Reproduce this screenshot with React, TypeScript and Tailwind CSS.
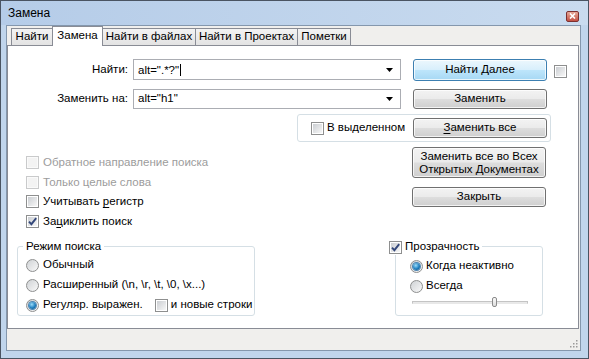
import clsx from "clsx";
import type { ReactNode } from "react";

const ui = "font-['Liberation_Sans',Arial,sans-serif] text-[11.5px] leading-none text-black";

function CheckBox({ checked = false, disabled = false }: { checked?: boolean; disabled?: boolean }) {
  return (
    <span
      className={clsx(
        "flex h-[13px] w-[13px] shrink-0 border p-px",
        disabled ? "border-[#c9cacb] bg-[#fafafa]" : "border-[#8e8f8f] bg-white"
      )}
    >
      <span
        className={clsx(
          "relative flex h-full w-full items-center justify-center",
          disabled ? "bg-[#f3f3f3]" : "bg-linear-to-br from-[#cbced2] to-[#f7f7f7]"
        )}
      >
        {checked && (
          <svg viewBox="0 0 11 11" className="absolute left-[-1px] top-[-1px] h-[11px] w-[11px]">
            <path d="M2 5.6 L4.4 8.2 L9.2 2.2" fill="none" stroke="#33477a" strokeWidth="1.9" />
          </svg>
        )}
      </span>
    </span>
  );
}

function Radio({ checked = false }: { checked?: boolean }) {
  return (
    <span className="flex h-[13px] w-[13px] shrink-0 items-center justify-center rounded-full border border-[#8e8f8f] bg-linear-to-br from-[#cfd2d5] to-[#f9f9f9]">
      {checked && (
        <span className="h-[7px] w-[7px] rounded-full bg-[radial-gradient(circle_at_40%_35%,#9ddcf8,#1e7fc0_55%,#0c4877)] shadow-[0_0_0_1px_#4d86b3]" />
      )}
    </span>
  );
}

function Button({ children, primary = false, className }: { children: ReactNode; primary?: boolean; className?: string }) {
  return (
    <div
      className={clsx(
        "flex w-[134px] shrink-0 flex-col items-center justify-center rounded-[3px] border text-center shadow-[inset_0_0_0_1px_rgba(255,255,255,0.75)]",
        primary
          ? "border-[#3c7fb1] bg-[linear-gradient(#ecf7fd,#d8effc_48%,#bde5fb_52%,#a6d8f4)]"
          : "border-[#707070] bg-[linear-gradient(#f3f3f3,#ebebeb_48%,#dddddd_52%,#cfcfcf)]",
        className
      )}
    >
      {children}
    </div>
  );
}

function Combo({ value, caret = false, className }: { value: string; caret?: boolean; className?: string }) {
  return (
    <div className={clsx("flex w-[268px] items-center border border-[#abadb3] bg-white pl-[4px] pr-[7px]", className)}>
      <span className="flex-1">
        {value}
        {caret && <span className="ml-px inline-block h-[12px] w-px translate-y-[2px] bg-black" />}
      </span>
      <svg viewBox="0 0 7 4" className="h-[4px] w-[7px]">
        <path d="M0 0 H7 L3.5 4 Z" fill="#000" />
      </svg>
    </div>
  );
}

function Option({ children, checked, disabled }: { children: ReactNode; checked?: boolean; disabled?: boolean }) {
  return (
    <div className="flex h-[19.5px] items-center gap-[4px]">
      <CheckBox checked={checked} disabled={disabled} />
      <span className={disabled ? "text-[#9c9c9c]" : ""}>{children}</span>
    </div>
  );
}

const tabs = [
  { label: "Найти", w: "w-[42px]" },
  { label: "Замена", w: "w-[51px]", active: true },
  { label: "Найти в файлах", w: "w-[94px]" },
  { label: "Найти в Проектах", w: "w-[103px]" },
  { label: "Пометки", w: "w-[54px]" },
];

export default function App() {
  return (
    <div className={clsx("flex h-[359px] w-[589px] flex-col border border-[#4a5462] bg-[#c0d5ec]", ui)}>
      {/* title bar */}
      <div className="flex h-[24px] shrink-0 items-center justify-between bg-linear-to-r from-[#b5cce8] to-[#c9dbef] pl-[7px] pr-[9px]">
        <span className="text-[12px]">Замена</span>
        <span className="mt-[6px] flex h-[11px] w-[13px] items-center justify-center rounded-[2px] border border-[#7d3030] bg-linear-to-b from-[#e6a797] to-[#c24f43]">
          <svg viewBox="0 0 7 6" className="h-[6px] w-[7px]">
            <path d="M1 0.5 L6 5.5 M6 0.5 L1 5.5" stroke="#fff" strokeWidth="1.6" />
          </svg>
        </span>
      </div>

      {/* client area */}
      <div className="ml-[5px] mr-[7px] flex h-[326px] shrink-0 flex-col border border-[#8497ad] bg-[#f0efed]">
        <div className="flex h-[19px] shrink-0 items-end pl-[4px]">
          {tabs.map((t) => (
            <div
              key={t.label}
              className={clsx(
                "-ml-px flex items-center justify-center border border-b-0 first:ml-0",
                t.w,
                t.active
                  ? "relative z-10 -mb-px h-[20px] border-[#898c95] bg-white pb-[2px]"
                  : "h-[17px] border-[#898c95] bg-linear-to-b from-[#f3f3f3] to-[#e3e3e3]"
              )}
            >
              {t.label}
            </div>
          ))}
        </div>

        {/* tab page */}
        <div className="flex h-[284px] w-[572px] shrink-0 flex-col border border-[#898c95] bg-white">
          <div className="mt-[13px] flex h-[22px] items-center">
            <span className="w-[120px] text-right">Найти:</span>
            <Combo value={'alt=".*?"'} caret className="ml-[5px] h-[21px] self-start" />
            <Button primary className="ml-[12px] h-[22px]">
              Найти Далее
            </Button>
            <span className="ml-[7px] mt-[2px]">
              <CheckBox />
            </span>
          </div>

          <div className="mt-[8px] flex h-[20px] items-center">
            <span className="w-[120px] text-right">Заменить на:</span>
            <Combo value={'alt="h1"'} className="ml-[5px] h-[20px]" />
            <Button className="ml-[12px] h-[20px]">Заменить</Button>
          </div>

          <div className="mt-[5px] flex h-[28px]">
            <div className="ml-[289px] flex w-[254px] items-center justify-between rounded-[3px] border border-[#d5dfe5] pl-[13px] pr-[3px]">
              <span className="flex items-center gap-[3px]">
                <CheckBox />
                В выделенном
              </span>
              <Button className="h-[20px]">
                <span>
                  <span className="underline underline-offset-2">З</span>аменить все
                </span>
              </Button>
            </div>
          </div>

          <div className="flex h-[104px]">
            <div className="ml-[18px] flex w-[386px] flex-col pt-[11px]">
              <Option disabled>Обратное направление поиска</Option>
              <Option disabled>Только целые слова</Option>
              <Option>
                Учитывать <span className="underline underline-offset-2">р</span>егистр
              </Option>
              <Option checked>
                За<span className="underline underline-offset-2">ц</span>иклить поиск
              </Option>
            </div>
            <div className="flex flex-col pt-[5px]">
              <Button className="h-[31px] leading-[13px]">
                <span>Заменить все во Всех</span>
                <span>
                  Открытых <span className="underline underline-offset-2">Д</span>окументах
                </span>
              </Button>
              <Button className="mt-[9px] h-[20px]">Закрыть</Button>
            </div>
          </div>

          <div className="flex items-start">
            <div className="relative ml-[9px] flex h-[70px] w-[238px] flex-col rounded-[3px] border border-[#d5dfe5] pl-[8px] pt-[8px]">
              <span className="absolute left-[5px] top-[-8px] flex h-[16px] items-center bg-white px-[3px]">Режим поиска</span>
              <div className="flex h-[20px] items-center gap-[4px]">
                <Radio />
                Обычный
              </div>
              <div className="flex h-[20px] items-center gap-[4px]">
                <Radio />
                {"Расширенный (\\n, \\r, \\t, \\0, \\x...)"}
              </div>
              <div className="flex h-[20px] items-center gap-[4px]">
                <Radio checked />
                Регуляр. выражен.
                <span className="ml-[8px] flex items-center gap-[3px]">
                  <CheckBox />
                  и новые строки
                </span>
              </div>
            </div>

            <div className="relative ml-[140px] flex h-[70px] w-[148px] flex-col rounded-[3px] border border-[#d5dfe5] pl-[14px] pt-[9px]">
              <span className="absolute left-[-7px] top-[-8px] flex h-[16px] items-center gap-[3px] bg-white pr-[2px]">
                <CheckBox checked />
                Прозрачность
              </span>
              <div className="flex h-[20px] items-center gap-[3px]">
                <Radio checked />
                Когда неактивно
              </div>
              <div className="flex h-[20px] items-center gap-[3px]">
                <Radio />
                Всегда
              </div>
              <div className="relative ml-[2px] flex h-[12px] w-[116px] items-center">
                <span className="h-[3px] w-full border border-[#c4c4c4] border-b-[#e8e8e8] bg-[#e9e9e9]" />
                <span className="absolute left-[80px] top-[1px] h-[10px] w-[5px] rounded-[2px] border border-[#8a8a8a] bg-linear-to-b from-[#fafafa] to-[#dcdcdc]" />
              </div>
            </div>
          </div>
        </div>

        {/* status strip with resize grip */}
        <div className="flex flex-1 items-end justify-end pb-[2px] pr-[2px]">
          <svg viewBox="0 0 8 8" className="h-[8px] w-[8px]">
            {[
              [6, 0],
              [6, 3],
              [3, 3],
              [6, 6],
              [3, 6],
              [0, 6],
            ].map(([x, y]) => (
              <rect key={`${x}-${y}`} x={x} y={y} width="1.5" height="1.5" fill="#9a9a9a" />
            ))}
          </svg>
        </div>
      </div>
    </div>
  );
}
